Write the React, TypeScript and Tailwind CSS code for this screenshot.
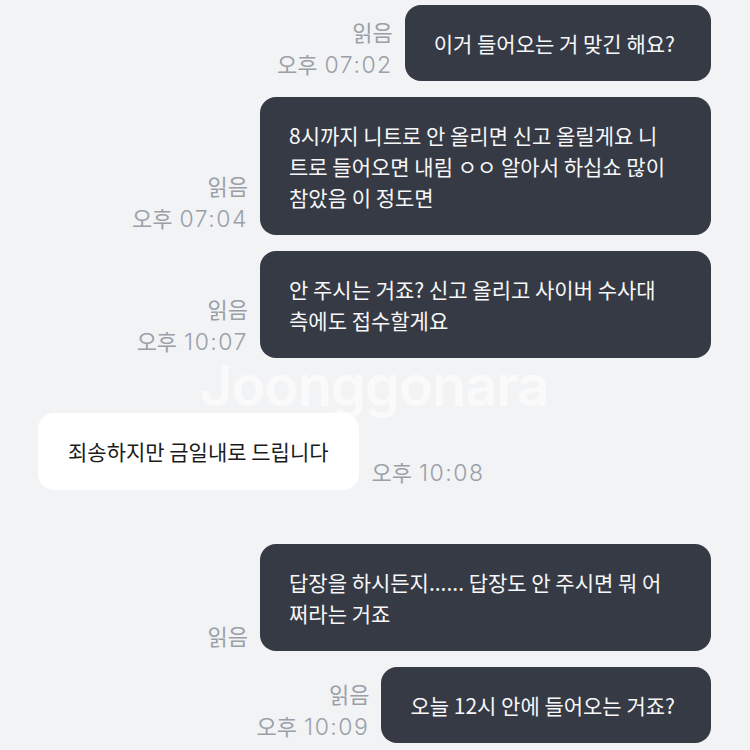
const KR = "font-['Noto_Sans_CJK_KR','Noto_Sans',sans-serif]"

type Meta = { read?: boolean; time?: string }

function MetaInfo({ read, time }: Meta) {
  return (
    <div className="flex flex-col items-end text-[22px] leading-[32px] text-[#9aa0a8] whitespace-nowrap">
      {read && <span>읽음</span>}
      {time && (
        <span>
          오후
          <span className="ml-[7px] font-['Inter',sans-serif] font-light text-[23px] tracking-[1.5px]">{time}</span>
        </span>
      )}
    </div>
  )
}

function Sent({ text, read = true, time, className = "" }: { text: string; read?: boolean; time?: string; className?: string }) {
  return (
    <div className={`flex items-end justify-end gap-[12px] ${className}`}>
      <MetaInfo read={read} time={time} />
      <div className="max-w-[451px] rounded-2xl bg-[#363a45] pl-[29px] pr-[36px] py-[22.5px] text-[21px] leading-[31px] text-[#f7f7f8]">
        {text}
      </div>
    </div>
  )
}

function Received({ text, time, className = "" }: { text: string; time: string; className?: string }) {
  return (
    <div className={`flex items-end gap-[13px] ${className}`}>
      <div className="max-w-[451px] rounded-2xl bg-white px-[30px] py-[23px] text-[21px] leading-[31px] text-[#1b1b1b]">
        {text}
      </div>
      <div className="pb-[1px]">
        <MetaInfo time={time} />
      </div>
    </div>
  )
}

export default function App() {
  return (
    <div className={`relative h-[750px] w-[750px] overflow-hidden bg-[#f2f3f5] ${KR}`}>
      <div className="flex flex-col pt-[5px] pl-[38px] pr-[39px]">
        <Sent text="이거 들어오는 거 맞긴 해요?" time="07:02" />
        <Sent className="mt-4" text="8시까지 니트로 안 올리면 신고 올릴게요 니트로 들어오면 내림 ㅇㅇ 알아서 하십쇼 많이 참았음 이 정도면" time="07:04" />
        <Sent className="mt-4" text="안 주시는 거죠? 신고 올리고 사이버 수사대 측에도 접수할게요" time="10:07" />
        <Received className="mt-[55px]" text="죄송하지만 금일내로 드립니다" time="10:08" />
        <Sent className="mt-[54px]" text="답장을 하시든지...... 답장도 안 주시면 뭐 어쩌라는 거죠" />
        <Sent className="mt-4" text="오늘 12시 안에 들어오는 거죠?" time="10:09" />
      </div>
      <div className="pointer-events-none absolute left-[200px] top-[358px] font-['Inter',sans-serif] text-[56px] font-semibold leading-none tracking-[-1px] text-white/60">
        Joonggonara
      </div>
    </div>
  )
}
